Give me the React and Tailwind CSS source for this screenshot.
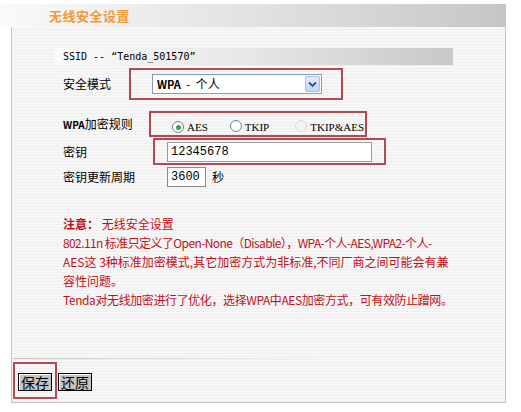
export default function App() {
  const cjk = { fontFamily: '"Noto Sans CJK SC", "Noto Sans", sans-serif' };
  const stripes =
    "bg-[repeating-linear-gradient(180deg,#f7f7f7_0px,#f7f7f7_2px,#efefef_2px,#efefef_3px)]";
  const Radio = ({ checked, disabled }) => (
    <span
      className={`inline-flex items-center justify-center w-[12px] h-[12px] rounded-full border ${
        disabled ? "border-[#dcdcdc] bg-[#f4f4f4]" : "border-[#6f7f8f] bg-white"
      }`}
    >
      {checked && <span className="w-[5px] h-[5px] rounded-full bg-[#3fa03f]" />}
    </span>
  );
  return (
    <div className="w-[521px] h-[412px] bg-white overflow-hidden text-black" style={cjk}>
      <div className="mt-[4px] h-[23px] w-[506px] bg-gradient-to-r from-[#fafafa] via-[#e2e2e2] to-[#c6c6c6] flex items-center pl-[49px]">
        <span className="text-[13px] font-bold text-[#f29a35] leading-none tracking-[0.5px]">无线安全设置</span>
      </div>
      <div className={`ml-[11px] w-[495px] h-[376px] border-l border-r border-b border-[#c4c4c4] ${stripes} flex flex-col`}>
        <div className="mt-[21px] ml-[43px] w-[398px] h-[17px] bg-gradient-to-r from-[#fbfbfb] via-[#e6e6e6] to-[#c8c8c8] flex items-center pl-[8px]">
          <span className="text-[10px] leading-none" style={{ fontFamily: '"DejaVu Sans Mono", monospace' }}>
            SSID -- “Tenda_501570”
          </span>
        </div>
        <div className="mt-[3px] flex items-center pl-[51px]">
          <span className="w-[66px] text-[12px] leading-none">安全模式</span>
          <div className="w-[214px] h-[32px] border-2 border-[#b24a55] flex items-center pl-[21px]">
            <div className="w-[170px] h-[20px] border border-[#8a9aaa] bg-white flex items-center justify-between pl-[4px] pr-[1px]">
              <span className="text-[12px] leading-none whitespace-pre">
                <span className="font-semibold text-[11px]">WPA</span>{"  -  个人"}
              </span>
              <span className="w-[15px] h-[16px] rounded-[2px] border border-[#a8bde0] bg-gradient-to-b from-[#e4ecfa] to-[#c2d4f2] flex items-center justify-center">
                <svg width="9" height="7" viewBox="0 0 9 7">
                  <path d="M1 1.5 L4.5 5 L8 1.5" stroke="#2d4f8e" strokeWidth="1.8" fill="none" />
                </svg>
              </span>
            </div>
          </div>
        </div>
        <div className="mt-[11px] flex items-center pl-[51px]">
          <span className="w-[86px] text-[12px] leading-none">
            <span className="text-[10px] font-bold">WPA</span>加密规则
          </span>
          <div className="w-[218px] h-[26px] border-2 border-[#b24a55] flex items-center pl-[21px] pt-[6px] text-[11px] leading-none" style={{ fontFamily: '"Liberation Serif", serif' }}>
            <Radio checked />
            <span className="ml-[3px]">AES</span>
            <span className="ml-[22px]"><Radio /></span>
            <span className="ml-[3px]">TKIP</span>
            <span className="ml-[26px]"><Radio disabled /></span>
            <span className="ml-[3px]">TKIP&amp;AES</span>
          </div>
        </div>
        <div className="mt-[1px] flex items-center pl-[51px]">
          <span className="w-[90px] text-[12px] leading-none">密钥</span>
          <div className="w-[233px] h-[27px] border-2 border-[#b24a55] flex items-center pl-[12px]">
            <div className="w-[205px] h-[20px] border border-[#9a9a9a] bg-white flex items-center pl-[3px]">
              <span className="text-[12px] leading-none" style={{ fontFamily: '"Liberation Mono", monospace' }}>12345678</span>
            </div>
          </div>
        </div>
        <div className="mt-[2px] flex items-center pl-[51px]">
          <span className="w-[104px] text-[12px] leading-none">密钥更新周期</span>
          <div className="w-[39px] h-[20px] border border-[#8a8a8a] bg-white flex items-center pl-[3px]">
            <span className="text-[12px] leading-none" style={{ fontFamily: '"Liberation Mono", monospace' }}>3600</span>
          </div>
          <span className="ml-[6px] text-[12px] leading-none">秒</span>
        </div>
        <div className="mt-[27px] pl-[51px] text-[12px] leading-[19px] text-[#c40e16] whitespace-nowrap">
          <div>
            <span className="font-bold">注意：</span> 无线安全设置
          </div>
          <div className="tracking-[-0.6px]">802.11n 标准只定义了Open-None（Disable），WPA-个人-AES,WPA2-个人-</div>
          <div>AES这 3种标准加密模式,其它加密方式为非标准,不同厂商之间可能会有兼</div>
          <div>容性问题。</div>
          <div className="tracking-[-0.4px]">Tenda对无线加密进行了优化，选择WPA中AES加密方式，可有效防止蹭网。</div>
        </div>
        <div className="mt-auto mb-[3px] ml-[1px] h-[1px] w-[320px] bg-gradient-to-r from-[#c4c4c4] to-transparent" />
        <div className="mb-[3px] ml-[1px] flex items-center">
          <div className="w-[44px] h-[37px] border-2 border-[#b24a55] flex items-center pl-[3px] pt-[3px]">
            <button className="w-[34px] h-[18px] border border-black bg-[#c4c4c4] shadow-[inset_1px_1px_0_#ffffff] text-[14px] leading-none flex items-center justify-center">保存</button>
          </div>
          <button className="ml-[1px] mt-[3px] w-[34px] h-[18px] border border-black bg-[#c4c4c4] shadow-[inset_1px_1px_0_#ffffff] text-[14px] leading-none flex items-center justify-center">还原</button>
        </div>
      </div>
    </div>
  );
}
